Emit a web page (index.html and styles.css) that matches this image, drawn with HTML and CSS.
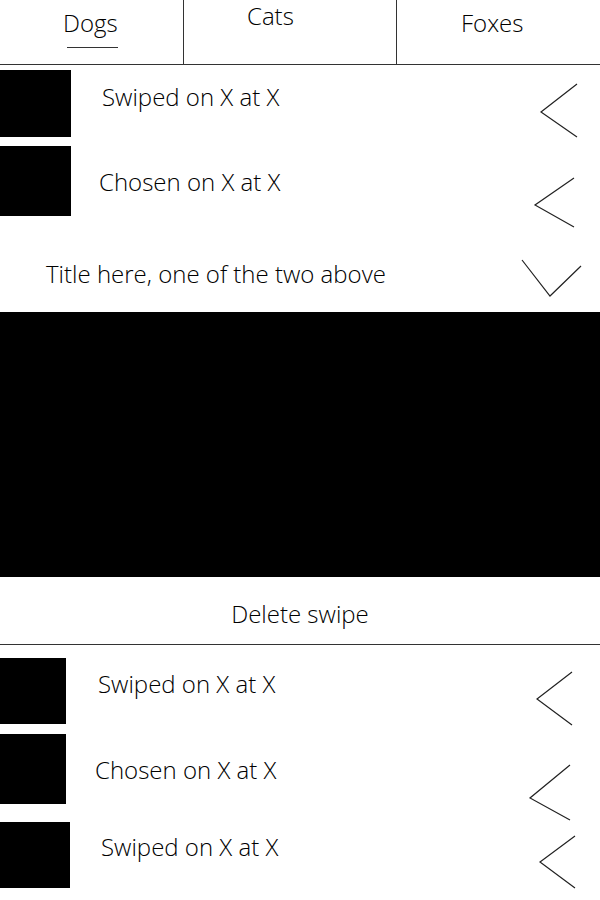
FILE: index.html
```html
<!DOCTYPE html>
<html lang="en">
<head>
<meta charset="utf-8">
<title>Swipes</title>
<link rel="stylesheet" href="styles.css">
</head>
<body>
<div class="page">
  <nav class="tabs">
    <div class="tab tab-dogs"><span class="tab-label active">Dogs</span></div>
    <div class="tab tab-cats"><span class="tab-label">Cats</span></div>
    <div class="tab tab-foxes"><span class="tab-label">Foxes</span></div>
  </nav>

  <div class="row r1">
    <div class="thumb"></div>
    <div class="row-text">Swiped on X at X</div>
    <svg class="chev" width="70" height="90" viewBox="0 0 70 90"><polyline points="57,14 21,42 57,67"/></svg>
  </div>
  <div class="row r2">
    <div class="thumb"></div>
    <div class="row-text">Chosen on X at X</div>
    <svg class="chev" width="70" height="90" viewBox="0 0 70 90"><polyline points="54,32 15,59 54,81"/></svg>
  </div>

  <div class="title-row">
    <div class="title-text">Title here, one of the two above</div>
    <svg class="chev-down" width="75" height="50" viewBox="0 0 75 50"><polyline points="7,10 35,46 66,16"/></svg>
  </div>

  <div class="media"></div>

  <div class="delete">Delete swipe</div>

  <div class="row r3">
    <div class="thumb"></div>
    <div class="row-text">Swiped on X at X</div>
    <svg class="chev" width="70" height="90" viewBox="0 0 70 90"><polyline points="52,14 17,41 52,67"/></svg>
  </div>
  <div class="row r4">
    <div class="thumb"></div>
    <div class="row-text">Chosen on X at X</div>
    <svg class="chev" width="70" height="90" viewBox="0 0 70 90"><polyline points="50,31 10,64 50,86"/></svg>
  </div>
  <div class="row r5">
    <div class="thumb"></div>
    <div class="row-text">Swiped on X at X</div>
    <svg class="chev" width="70" height="90" viewBox="0 0 70 90"><polyline points="55,14 20,40 55,66"/></svg>
  </div>
</div>
</body>
</html>
```

FILE: styles.css
```css
* { box-sizing: border-box; }

html, body {
  margin: 0;
  padding: 0;
  background: #fff;
}

body {
  font-family: "Open Sans", "Segoe UI", sans-serif;
  font-weight: 300;
  font-size: 24px;
  line-height: 30px;
  color: #000;
}

.page {
  width: 600px;
  height: 900px;
  overflow: hidden;
}

/* Tabs */
.tabs {
  display: flex;
  height: 65px;
  border-bottom: 1px solid #333;
  line-height: 24px;
}

.tab {
  height: 64px;
  padding-left: 63px;
}

.tab-dogs { width: 184px; border-right: 1px solid #333; padding-top: 11px; }
.tab-cats { width: 213px; border-right: 1px solid #333; padding-top: 4px; }
.tab-foxes { flex: 1; padding-top: 11px; padding-left: 64px; }

.tab-label {
  display: inline-block;
  position: relative;
}

.tab-label.active::after {
  content: "";
  position: absolute;
  left: 4px;
  right: 0;
  top: 36px;
  height: 1px;
  background: #333;
}

/* Rows */
.row {
  display: flex;
  align-items: flex-start;
  position: relative;
}

.thumb {
  background: #000;
  flex: none;
}

.row-text {
  white-space: nowrap;
}

.chev {
  flex: none;
  margin-left: auto;
  margin-right: 10px;
  overflow: visible;
}

.chev polyline,
.chev-down polyline {
  fill: none;
  stroke: #222;
  stroke-width: 1.2;
}

.r1 { margin-top: 5px; height: 67px; }
.r1 .thumb { width: 71px; height: 67px; }
.r1 .row-text { margin-left: 31px; margin-top: 12px; }

.r2 { margin-top: 9px; height: 70px; }
.r2 .thumb { width: 71px; height: 70px; }
.r2 .row-text { margin-left: 28px; margin-top: 21px; }

.r3 { margin-top: 13px; height: 66px; }
.r3 .thumb { width: 66px; height: 66px; }
.r3 .row-text { margin-left: 32px; margin-top: 11px; }

.r4 { margin-top: 10px; height: 70px; }
.r4 .thumb { width: 66px; height: 70px; }
.r4 .row-text { margin-left: 29px; margin-top: 21px; }

.r5 { margin-top: 18px; height: 66px; }
.r5 .thumb { width: 70px; height: 66px; }
.r5 .row-text { margin-left: 31px; margin-top: 10px; }

/* Title */
.title-row {
  display: flex;
  align-items: flex-start;
  height: 96px;
}

.title-text {
  margin-left: 46px;
  margin-top: 43px;
  white-space: nowrap;
}

.chev-down {
  flex: none;
  margin-left: auto;
  margin-right: 10px;
  margin-top: 34px;
  overflow: visible;
}

/* Media block */
.media {
  height: 265px;
  background: #000;
}

/* Delete */
.delete {
  height: 68px;
  padding-top: 22px;
  text-align: center;
  border-bottom: 1px solid #333;
}
```
